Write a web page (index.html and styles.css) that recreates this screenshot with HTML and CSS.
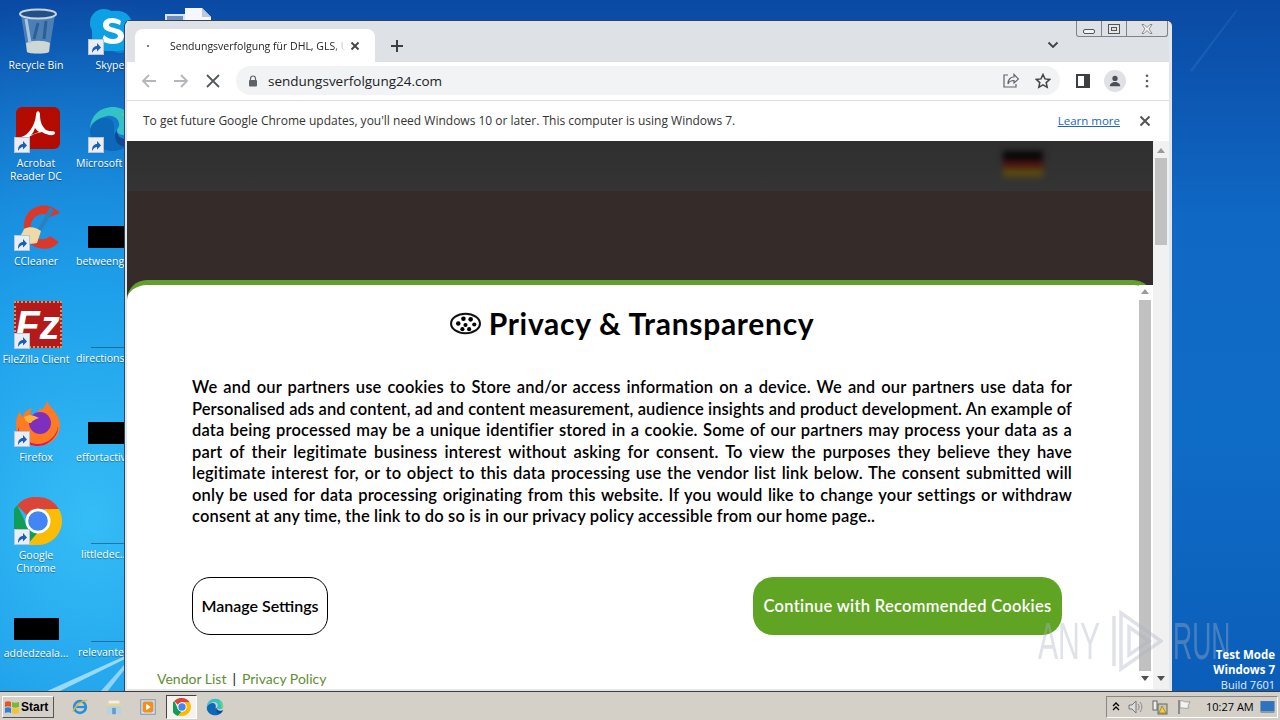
FILE: index.html
```html
<!DOCTYPE html>
<html lang="en">
<head>
<meta charset="utf-8">
<title>Privacy &amp; Transparency</title>
<link rel="stylesheet" href="styles.css">
</head>
<body>
<svg class="defs" width="0" height="0" aria-hidden="true">
  <defs>
    <symbol id="chrome" viewBox="2 2 44 44">
      <path d="M24 2a22 22 0 0 1 19.05 11H24a11 11 0 0 0-9.9 6.2L5 9.5A22 22 0 0 1 24 2z" fill="#db4437"/>
      <path d="M5 9.5l9.5 20a11 11 0 0 0 9 5.5L14 46A22 22 0 0 1 5 9.5z" fill="#0f9d58"/>
      <path d="M43.05 13A22 22 0 0 1 24 46h-10l9.5-11a11 11 0 0 0 9.5-16.5L30 13z" fill="#fbbc05"/>
      <circle cx="24" cy="24" r="11.5" fill="#fff"/>
      <circle cx="24" cy="24" r="9" fill="#4285f4"/>
    </symbol>
    <symbol id="edge" viewBox="0 0 48 48">
      <path d="M2 25C2 11 12 2 25 2c12 0 21 9 21 20 0 5-4 8-10 8-4 0-7-2-7-4 0-3 3-4 2-8-1-5-6-8-12-7C10 13 2 18 2 25z" fill="#35c1c8"/>
      <path d="M2 25c2-8 9-12 16-12 6 0 9 5 8 11-1 8 6 15 14 15-4 5-9 7-15 7C12 46 2 37 2 25z" fill="#0c68b8"/>
      <path d="M29 26c0 5 4 8 9 8 4 0 6-1 8-3-2 6-5 9-7 10-7 2-12-4-12-10 0-3 1-5 2-5z" fill="#114a93"/>
      <path d="M33 8c8 3 13 9 13 14 0 4-2 6-5 7 2-8-1-15-8-21z" fill="#7ed957"/>
    </symbol>
    <symbol id="shortcut" viewBox="0 0 16 16">
      <rect x=".5" y=".5" width="15" height="15" fill="#e9eef5" stroke="#b9c3d2"/>
      <path d="M4 14c0-5 2-7 5-7V4l4 4.500-4 4V10c-2 0-3 1-5 4z" fill="#1d5fb3"/>
    </symbol>
  </defs>
</svg>

<main class="desktop">
  <svg class="wall-rays" viewBox="0 0 1280 720" aria-hidden="true">
    <path d="M45 692L125 656v3L58 692z" fill="#bfe9fb" opacity=".75"/>
    <path d="M100 692l25-28v5l-18 23z" fill="#d6f2fc" opacity=".6"/>
    <path d="M1190 70L1236 10h2l-46 62z" fill="#3b83c9" opacity=".25"/>
  </svg>

  <svg class="peek-doc" viewBox="0 0 46 14" aria-hidden="true">
    <rect x="0" y="6" width="20" height="8" fill="#d7e4f2"/>
    <rect x="2" y="8" width="16" height="6" fill="#6d8ec0"/>
    <path d="M20 0h17l9 9v5H20z" fill="#f5f7fa"/>
    <path d="M37 0l9 9h-9z" fill="#b9c9dc"/>
  </svg>

  <div class="icons">
    <div class="dicon">
      <svg class="dicon-art" viewBox="0 0 48 48" aria-hidden="true">
        <path d="M7 8l6 37c3 2 19 2 22 0l6-37z" fill="#4d7fb4"/>
        <path d="M12 36l1 9c3 2 19 2 22 0l1-9c-6-3-18-3-24 0z" fill="#cfd6d6"/>
        <path d="M12 12l4 24" stroke="#a7c6e2" stroke-width="3" fill="none"/>
        <path d="M24 16l-4 16M32 14l-2 18" stroke="#2a5f98" stroke-width="3" fill="none"/>
        <ellipse cx="24" cy="7" rx="18" ry="4.500" fill="#244f85" stroke="#c4d5e6" stroke-width="2"/>
      </svg>
      <span class="dicon-name">Recycle Bin</span>
    </div>
    <div class="dicon">
      <svg class="dicon-art" viewBox="0 0 48 48" aria-hidden="true">
        <circle cx="16" cy="16" r="14" fill="#11a0e0"/><circle cx="32" cy="32" r="14" fill="#0b83cc"/>
        <rect x="4" y="4" width="40" height="40" rx="14" fill="#0ea0e4"/>
        <path d="M33 14c-2-2-6-3-9-3-6 0-9 3-9 7 0 9 15 6 15 11 0 2-2 3-5 3-4 0-7-2-9-4l-2 6c3 2 7 3 11 3 7 0 11-3 11-8 0-9-15-7-15-11 0-2 2-2 4-2 3 0 5 1 7 2z" fill="#fff"/>
      </svg>
      <svg class="dicon-arrow" aria-hidden="true"><use href="#shortcut"/></svg>
      <span class="dicon-name">Skype</span>
    </div>
    <div class="dicon">
      <svg class="dicon-art" viewBox="0 0 48 48" aria-hidden="true">
        <rect x="2" y="2" width="44" height="42" rx="6" fill="#b30b00"/>
        <path d="M7 32c8-2 14-12 15-22 0-5 4-5 4 0 0 8 3 12 6 15 4 2 9 0 9 3s-7 3-13-1c-6 1-11 3-14 6-4 5-9 2-7-1zm14-9c-1 3-2 5-4 7l8-3c-2-1-3-3-4-4z" fill="#fff"/>
      </svg>
      <svg class="dicon-arrow" aria-hidden="true"><use href="#shortcut"/></svg>
      <span class="dicon-name">Acrobat Reader DC</span>
    </div>
    <div class="dicon">
      <svg class="dicon-art" aria-hidden="true"><use href="#edge"/></svg>
      <svg class="dicon-arrow" aria-hidden="true"><use href="#shortcut"/></svg>
      <span class="dicon-name dicon-left-3">Microsoft Edge</span>
    </div>
    <div class="dicon">
      <svg class="dicon-art" viewBox="0 0 48 48" aria-hidden="true">
        <path d="M46 10C38 0 22 0 14 10 7 20 9 34 18 42c9 6 20 5 27-3l-9-6c-5 5-13 4-17-1-4-6-3-13 2-18 5-4 11-4 15 0z" fill="#d8392b"/>
        <path d="M36 4L24 26l3 2L40 7z" fill="#2f7fbe"/>
        <path d="M10 26c5-3 12-2 17 2l-4 12c-7 2-16 0-20-6 3 0 5-3 7-8z" fill="#efd9a6"/>
      </svg>
      <svg class="dicon-arrow" aria-hidden="true"><use href="#shortcut"/></svg>
      <span class="dicon-name">CCleaner</span>
    </div>
    <div class="dicon">
      <div class="censor censor-wide"></div>
      <span class="dicon-name dicon-left-3">betweengroup.rtf</span>
    </div>
    <div class="dicon">
      <div class="fz-logo"><span class="fz-text">Fz</span></div>
      <svg class="dicon-arrow" aria-hidden="true"><use href="#shortcut"/></svg>
      <span class="dicon-name">FileZilla Client</span>
    </div>
    <div class="dicon">
      <div class="doc-line"></div>
      <span class="dicon-name dicon-left-3">directionsfile.rtf</span>
    </div>
    <div class="dicon">
      <svg class="dicon-art" viewBox="0 0 48 48" aria-hidden="true">
        <path d="M33 2c1 5 13 12 13 24 0 12-10 21-22 21C11 47 1 37 2 24c0-4 2-9 4-12 0 3 1 4 3 6 1-5 5-8 9-9-2 3-2 5-1 7 5 0 8-4 9-7 1 3 4 2 7-7z" fill="#ff7a22"/>
        <path d="M4 28c2 10 10 17 20 17 10 0 19-8 20-18 1 9-9 20-20 20C12 47 3 38 4 28z" fill="#e5134f"/>
        <circle cx="26" cy="24" r="11" fill="#7d2fbf"/>
        <path d="M10 18c5-3 10-2 15 1-4 1-7 3-8 5-3 0-6-2-7-6z" fill="#ffb13b"/>
      </svg>
      <svg class="dicon-arrow" aria-hidden="true"><use href="#shortcut"/></svg>
      <span class="dicon-name">Firefox</span>
    </div>
    <div class="dicon">
      <div class="censor censor-wide"></div>
      <span class="dicon-name dicon-left-3">effortactive.rtf</span>
    </div>
    <div class="dicon">
      <svg class="dicon-art" aria-hidden="true"><use href="#chrome"/></svg>
      <svg class="dicon-arrow" aria-hidden="true"><use href="#shortcut"/></svg>
      <span class="dicon-name">Google Chrome</span>
    </div>
    <div class="dicon">
      <div class="doc-line"></div>
      <span class="dicon-name dicon-left-8">littledec...</span>
    </div>
    <div class="dicon">
      <div class="censor censor-low"></div>
      <span class="dicon-name">addedzeala...</span>
    </div>
    <div class="dicon">
      <div class="doc-line"></div>
      <span class="dicon-name dicon-left-5">relevantexe</span>
    </div>
  </div>

  <section class="window">
    <div class="tabstrip">
      <div class="tab">
        <span class="tab-dot"></span>
        <span class="tab-title">Sendungsverfolgung für DHL, GLS, UPS</span>
        <svg class="tab-close" viewBox="0 0 10 10" aria-hidden="true"><path d="M1.500 1.500l7 7m0-7l-7 7"/></svg>
      </div>
      <svg class="new-tab" viewBox="0 0 12 12" aria-hidden="true"><path d="M6 0v12M0 6h12"/></svg>
      <svg class="tab-menu" viewBox="0 0 12 8" aria-hidden="true"><path d="M1.500 1.500L6 6l4.500-4.500"/></svg>
    </div>

    <div class="toolbar">
      <svg class="nav nav-off" viewBox="0 0 16 16" aria-hidden="true"><path d="M15 8H2M8 2L2 8l6 6"/></svg>
      <svg class="nav nav-off" viewBox="0 0 16 16" aria-hidden="true"><path d="M1 8h13M8 2l6 6-6 6"/></svg>
      <svg class="nav nav-on" viewBox="0 0 16 16" aria-hidden="true"><path d="M2 2l12 12M14 2L2 14"/></svg>
      <div class="omnibox">
        <svg class="lock" viewBox="0 0 10 12" aria-hidden="true"><path d="M2.500 5V3.500a2.500 2.500 0 0 1 5 0V5" fill="none" stroke="#5f6368" stroke-width="1.200"/><rect x="1" y="5" width="8" height="6.500" rx="1" fill="#5f6368"/></svg>
        <span class="url">sendungsverfolgung24.com</span>
        <svg class="omni-icon" viewBox="0 0 16 16" aria-hidden="true"><path d="M5 2H1v12h12v-3M5 11c0-5 3-7 6-7V1.500L15.500 6 11 10V7.500c-3 0-5 1-6 3.500z"/></svg>
        <svg class="omni-icon omni-star" viewBox="0 0 16 16" aria-hidden="true"><path d="M8 1.500l2 4.400 4.800.5-3.600 3.200 1 4.700L8 11.900l-4.200 2.400 1-4.700L1.200 6.400 6 5.900z"/></svg>
      </div>
      <svg class="panel-icon" viewBox="0 0 14 14" aria-hidden="true"><path d="M0 0h14v14H0z" fill="#3c4043"/><path d="M2 2h6v10H2z" fill="#fff"/></svg>
      <div class="avatar"><svg class="avatar-art" viewBox="0 0 16 16" aria-hidden="true"><circle cx="8" cy="5" r="3"/><path d="M2 14c0-3 3-5 6-5s6 2 6 5z"/></svg></div>
      <svg class="menu-dots" viewBox="0 0 4 16" aria-hidden="true"><circle cx="2" cy="2" r="1.500"/><circle cx="2" cy="8" r="1.500"/><circle cx="2" cy="14" r="1.500"/></svg>
    </div>

    <div class="infobar">
      <span class="info-text">To get future Google Chrome updates, you'll need Windows 10 or later. This computer is using Windows 7.</span>
      <a class="info-link" href="#">Learn more</a>
      <svg class="info-close" viewBox="0 0 12 12" aria-hidden="true"><path d="M1.500 1.500l9 9m0-9l-9 9"/></svg>
    </div>

    <div class="page">
      <div class="page-main">
        <div class="page-band"></div>
        <div class="flag"><span class="flag-b"></span><span class="flag-r"></span><span class="flag-y"></span></div>
        <div class="modal">
          <div class="modal-body">
            <h1 class="modal-title">
              <svg class="cookie" viewBox="0 0 30 22" aria-hidden="true">
                <ellipse cx="15" cy="11" rx="14" ry="9.500" fill="none" stroke="#111" stroke-width="2"/>
                <circle cx="8" cy="11" r="2.200"/><circle cx="13" cy="6.500" r="2.200"/><circle cx="20" cy="7" r="2.200"/>
                <circle cx="23.500" cy="12" r="2"/><circle cx="15" cy="12.500" r="2"/><circle cx="12" cy="16.500" r="2"/><circle cx="18.500" cy="16.500" r="2"/>
              </svg>
              Privacy &amp; Transparency
            </h1>
            <p class="modal-copy">
              <span class="copy-line">We and our partners use cookies to Store and/or access information on a device. We and our partners use data for</span>
              <span class="copy-line copy-tight">Personalised ads and content, ad and content measurement, audience insights and product development. An example of</span>
              <span class="copy-line">data being processed may be a unique identifier stored in a cookie. Some of our partners may process your data as a</span>
              <span class="copy-line">part of their legitimate business interest without asking for consent. To view the purposes they believe they have</span>
              <span class="copy-line">legitimate interest for, or to object to this data processing use the vendor list link below. The consent submitted will</span>
              <span class="copy-line">only be used for data processing originating from this website. If you would like to change your settings or withdraw</span>
              <span class="copy-line copy-last">consent at any time, the link to do so is in our privacy policy accessible from our home page..</span>
            </p>
            <div class="modal-actions">
              <button class="btn btn-manage">Manage Settings</button>
              <button class="btn btn-continue">Continue with Recommended Cookies</button>
            </div>
            <div class="modal-links">
              <a class="modal-link" href="#">Vendor List</a><span class="link-sep">|</span><a class="modal-link" href="#">Privacy Policy</a>
            </div>
          </div>
          <div class="scrollbar scrollbar-inner">
            <span class="arrow-up"></span>
            <span class="thumb"></span>
            <span class="arrow-down"></span>
          </div>
        </div>
      </div>
      <div class="scrollbar scrollbar-outer">
        <span class="arrow-up"></span>
        <span class="thumb"></span>
        <span class="arrow-down"></span>
      </div>
    </div>

    <div class="caption">
      <span class="cap-btn cap-min"><span class="cap-min-glyph"></span></span>
      <span class="cap-btn cap-max"><span class="cap-max-glyph"></span></span>
      <span class="cap-btn cap-close">
        <svg class="cap-x" viewBox="0 0 12 10" aria-hidden="true"><path d="M1 .5h2l3 3 3-3h2L8 5l3 4.500H9L6 6.500 3 9.500H1L4 5z"/></svg>
      </span>
    </div>
  </section>

  <div class="watermark" aria-hidden="true">
    <span class="wm-text wm-any">ANY</span>
    <svg class="wm-logo" viewBox="0 0 51 62"><path d="M2 6v50M9 3l40 28L9 59zM17 17l20 14-20 14z"/></svg>
    <span class="wm-text wm-run">RUN</span>
  </div>

  <div class="testmode">
    <span class="tm-bold">Test Mode</span>
    <span class="tm-bold">Windows 7</span>
    <span class="tm-reg">Build 7601</span>
  </div>

  <footer class="taskbar">
    <button class="start">
      <svg class="start-flag" viewBox="0 0 16 14" aria-hidden="true">
        <path d="M1 2c2-1 4-1 6 0v5c-2-1-4-1-6 0z" fill="#e2552b"/>
        <path d="M8 2c2 1 4 1 7 0v5c-3 1-5 1-7 0z" fill="#7cb82f"/>
        <path d="M1 8c2-1 4-1 6 0v5c-2-1-4-1-6 0z" fill="#2f7fd6"/>
        <path d="M8 8c2 1 4 1 7 0v5c-3 1-5 1-7 0z" fill="#f4c22b"/>
      </svg>
      Start
    </button>
    <div class="quick">
      <span class="quick-item">
        <svg class="task-icon" viewBox="0 0 20 20" aria-hidden="true"><circle cx="10" cy="10" r="6.500" fill="none" stroke="#2b8fd8" stroke-width="3"/><path d="M4 10h12" stroke="#2b8fd8" stroke-width="2.500"/><path d="M2 15C5 8 12 3 18 2" fill="none" stroke="#e0b83a" stroke-width="1.500"/></svg>
      </span>
      <span class="quick-item">
        <svg class="task-icon" viewBox="0 0 20 20" aria-hidden="true"><path d="M2 6h16v12H2z" fill="#e8d48a"/><path d="M2 9h16v9H2z" fill="#b9d2e2"/><path d="M8 11h4v7H8z" fill="#5f9ccc"/><path d="M4 3h12v3H4z" fill="#f3f1e6"/></svg>
      </span>
      <span class="quick-item">
        <svg class="task-icon" viewBox="0 0 20 20" aria-hidden="true"><rect x="2" y="2" width="16" height="16" fill="#dbe4ef" stroke="#6f8db0"/><rect x="4" y="4" width="12" height="12" rx="2" fill="#f0901e"/><path d="M8 6.500l5 3.500-5 3.500z" fill="#fff"/></svg>
      </span>
      <span class="quick-item quick-active">
        <svg class="task-icon" aria-hidden="true"><use href="#chrome"/></svg>
      </span>
      <span class="quick-item">
        <svg class="task-icon" aria-hidden="true"><use href="#edge"/></svg>
      </span>
    </div>
    <div class="tray">
      <span class="tray-up">
        <svg class="tray-chevron" viewBox="0 0 8 9" aria-hidden="true"><path d="M1 4l3-3 3 3M1 8l3-3 3 3"/></svg>
      </span>
      <svg class="tray-icon tray-speaker" viewBox="0 0 16 16" aria-hidden="true"><path d="M1 6h3l4-4v12l-4-4H1z" fill="#ddd" stroke="#777"/><path d="M10 5c1.500 2 1.500 4 0 6M12 3c2.500 3 2.500 7 0 10" fill="none" stroke="#8a8a8a"/></svg>
      <svg class="tray-icon" viewBox="0 0 16 16" aria-hidden="true"><rect x="1" y="2" width="4" height="9" fill="#eee" stroke="#666"/><rect x="6" y="5" width="9" height="10" fill="#c9c4b4" stroke="#666"/><path d="M10 7l4 7H7z" fill="#f4cf2f" stroke="#8a6d00" stroke-width=".6"/></svg>
      <svg class="tray-icon" viewBox="0 0 16 16" aria-hidden="true"><path d="M3 1v14" stroke="#777" stroke-width="1.500"/><path d="M4 2c3-1 4 1 6 1 2 0 3 0 4-.5L12 7l1 2c-3 1-5-.5-9 0z" fill="#f2f2f2" stroke="#888" stroke-width=".7"/></svg>
      <span class="clock">10:27 AM</span>
      <svg class="tray-desktop" viewBox="0 0 16 14" aria-hidden="true"><rect x="0" y="0" width="16" height="12" fill="#2f72c0" stroke="#6a8ab0" stroke-width=".6"/><rect x="0" y="12" width="16" height="2" fill="#8a9aa8"/></svg>
    </div>
  </footer>
</main>
</body>
</html>
```
FILE: styles.css
```css
* { box-sizing: border-box; }
html, body { margin: 0; padding: 0; width: 1280px; height: 720px; overflow: hidden; }
body { font-family: "Open Sans", "DejaVu Sans", sans-serif; }
.defs { position: absolute; }

.desktop {
  position: relative;
  width: 1280px;
  height: 720px;
  overflow: hidden;
  background:
    radial-gradient(ellipse 420px 520px at 90px 520px, #35bdf6 0%, #1e9fea 45%, rgba(20,120,215,0) 100%),
    linear-gradient(180deg, #0a4aa4 0%, #0f68c4 30%, #0f6cc6 60%, #0a5cb8 100%);
}
.wall-rays { position: absolute; inset: 0; width: 1280px; height: 720px; }
.peek-doc { position: absolute; left: 165px; top: 8px; width: 46px; height: 14px; }

/* desktop icons */
.icons {
  position: absolute;
  left: -1px;
  top: 6px;
  display: grid;
  grid-template-columns: 74px 74px;
  grid-auto-rows: 98px;
}
.dicon {
  position: relative;
  display: flex;
  flex-direction: column;
  align-items: center;
  color: #fff;
}
.dicon-art { width: 48px; height: 48px; margin: 1px 0 0 3px; }
.dicon-arrow { position: absolute; left: 15px; top: 33px; width: 16px; height: 16px; }
.dicon-name {
  width: 74px;
  margin-top: 4px;
  font: 10.5px/13px "Open Sans", sans-serif;
  text-align: center;
  overflow: hidden;
  text-shadow: 0 1px 1px rgba(0,0,0,.4);
}
.dicon-left-3, .dicon-left-5, .dicon-left-8 { text-align: left; white-space: nowrap; }
.dicon-left-3 { padding-left: 3px; }
.dicon-left-5 { padding-left: 5px; }
.dicon-left-8 { padding-left: 8px; }
.censor { background: #000; height: 22px; margin-top: 24px; margin-bottom: 3px; }
.censor-wide { width: 60px; margin-left: 16px; }
.censor-low { width: 45px; }
.fz-logo {
  width: 48px;
  height: 47px;
  margin: 1px 0 1px 3px;
  background: #b51a1a;
  border: 2px dotted #c96;
  display: flex;
  align-items: center;
  justify-content: center;
}
.fz-text { font: italic 700 40px/1 "Liberation Sans", sans-serif; color: #fff; }
.doc-line { width: 52px; height: 1px; margin-top: 47px; margin-left: 14px; background: rgba(20,50,90,.5); }

/* browser window */
.window {
  position: absolute;
  left: 125px;
  top: 21px;
  width: 1047px;
  height: 670px;
  display: flex;
  flex-direction: column;
  padding: 0 3px 2px 2px;
  background: #e3e6ea;
  border-radius: 5px 5px 0 0;
  box-shadow: 0 -1px 0 #345, -1px 0 0 #234a68;
}
.tabstrip {
  height: 41px;
  flex: none;
  display: flex;
  align-items: flex-end;
  padding-left: 8px;
  background: #dee1e6;
}
.tab {
  width: 240px;
  height: 33px;
  display: flex;
  align-items: center;
  background: #fff;
  border-radius: 8px 8px 0 0;
}
.tab-dot { width: 2px; height: 2px; margin-left: 12px; background: #555; border-radius: 50%; }
.tab-title {
  width: 176px;
  margin-left: 21px;
  font: 10.5px/14px "Open Sans", sans-serif;
  color: #222;
  white-space: nowrap;
  overflow: hidden;
  -webkit-mask-image: linear-gradient(90deg, #000 92%, transparent);
  mask-image: linear-gradient(90deg, #000 92%, transparent);
}
.tab-close { width: 10px; height: 10px; margin-left: 4px; fill: none; stroke: #444; stroke-width: 1.800; }
.new-tab { width: 12px; height: 12px; margin: 0 0 10px 16px; fill: none; stroke: #3c4043; stroke-width: 2; }
.tab-menu { width: 12px; height: 8px; margin: 0 110px 13px auto; fill: none; stroke: #3c4043; stroke-width: 1.800; }

.toolbar {
  height: 39px;
  flex: none;
  display: flex;
  align-items: center;
  padding: 0 0 1px 14px;
  background: #fff;
  border-bottom: 1px solid #dadce0;
}
.nav { width: 16px; height: 16px; margin-right: 16px; fill: none; stroke-width: 1.800; }
.nav-off { stroke: #b4b6b9; }
.nav-on { stroke: #55585c; margin-right: 15px; }
.omnibox {
  width: 824px;
  height: 29px;
  flex: none;
  display: flex;
  align-items: center;
  padding-left: 12px;
  background: #f1f3f4;
  border-radius: 15px;
}
.lock { width: 10px; height: 12px; flex: none; }
.url { margin-left: 10px; font: 13.5px/18px "Open Sans", sans-serif; color: #202124; flex: 1; }
.omni-icon { width: 16px; height: 16px; margin-right: 16px; fill: none; stroke: #5f6368; stroke-width: 1.200; flex: none; }
.omni-star { stroke: #444; stroke-width: 1.500; margin-right: 9px; }
.panel-icon { width: 14px; height: 14px; margin-left: 16px; }
.avatar {
  width: 22px;
  height: 22px;
  margin-left: 14px;
  display: flex;
  align-items: center;
  justify-content: center;
  border-radius: 50%;
  background: #dfe1e5;
}
.avatar-art { width: 14px; height: 14px; fill: #4a5058; }
.menu-dots { width: 4px; height: 14px; margin-left: 19px; fill: #5a5e63; }

.infobar {
  height: 40px;
  flex: none;
  display: flex;
  align-items: center;
  padding-left: 16px;
  background: #fff;
}
.info-text { font: 12px/16px "Open Sans", sans-serif; color: #333; flex: 1; white-space: nowrap; }
.info-link { font: 11.500px/16px "Open Sans", sans-serif; color: #1a66c2; text-decoration: underline; }
.info-close { width: 12px; height: 12px; margin: 0 18px 0 19px; fill: none; stroke: #555; stroke-width: 2; }

/* page */
.page { flex: 1; display: flex; min-height: 0; }
.page-main {
  position: relative;
  flex: 1;
  background: #352c2a;
}
.page-band { height: 50px; background: linear-gradient(180deg, #2f2f2f, #343434); }
.flag {
  position: absolute;
  left: 876px;
  top: 10px;
  width: 40px;
  height: 26px;
  display: flex;
  flex-direction: column;
  filter: blur(3px);
}
.flag-b { flex: 1; background: #050505; }
.flag-r { flex: 1; background: #4a1212; }
.flag-y { flex: 1; background: #5a4a10; }

.modal {
  position: absolute;
  left: 0;
  right: 0;
  bottom: 0;
  top: 139px;
  display: flex;
  background: #fff;
  border-top: 5px solid #5fa02e;
  border-radius: 20px 20px 0 0;
}
.modal-body { flex: 1; padding: 18px 67px 0 65px; min-width: 0; color: #000; }
.modal-title {
  margin: 0;
  display: flex;
  align-items: center;
  justify-content: center;
  gap: 8px;
  font: 700 30px/40px Lato, sans-serif;
  letter-spacing: .7px;
}
.cookie { width: 31px; height: 23px; flex: none; }
.modal-copy { margin: 34px 0 0; font: 600 16.500px/21.500px Lato, sans-serif; letter-spacing: .15px; }
.copy-line { display: block; text-align: justify; text-align-last: justify; white-space: nowrap; }
.copy-tight { letter-spacing: .08px; }
.copy-last { text-align-last: left; }
.modal-actions { display: flex; justify-content: space-between; width: 870px; margin-top: 49px; }
.btn { height: 58px; font: 600 16px/20px Lato, sans-serif; cursor: pointer; }
.btn-manage { width: 136px; padding: 0; background: #fff; color: #000; border: 1px solid #000; border-radius: 18px; }
.btn-continue { width: 309px; padding: 0; background: #5fa523; color: #fff; border: 0; border-radius: 20px; font-size: 16.500px; letter-spacing: .3px; }
.modal-links { display: flex; margin: 34px 0 0 -35px; font: 14px/20px Lato, sans-serif; color: #111; }
.link-sep { margin: 0 6px; }
.modal-link { color: #5d8f32; text-decoration: none; }

/* scrollbars */
.scrollbar { display: flex; flex-direction: column; align-items: center; flex: none; background: #f1f1f1; }
.scrollbar-inner { width: 14px; padding: 4px 2px 0 0; background: #fff; }
.scrollbar-outer { width: 16px; padding-top: 7px; }
.thumb { width: 12px; background: #c1c1c1; }
.scrollbar-inner .thumb { flex: 1; margin: 6px 0 5px; }
.scrollbar-outer .thumb { height: 87px; margin: 5px 0 auto; }
.arrow-up { width: 0; height: 0; border: 4px solid transparent; border-top: 0; border-bottom: 5px solid #9a9a9a; }
.arrow-down { width: 0; height: 0; border: 4px solid transparent; border-bottom: 0; border-top: 5px solid #505050; margin-bottom: 8px; }

/* caption buttons */
.caption {
  position: absolute;
  top: 0;
  right: 4px;
  width: 92px;
  height: 16px;
  display: flex;
  border: 1px solid #7d838a;
  border-top: 0;
  border-radius: 0 0 3px 3px;
}
.cap-btn { display: flex; align-items: center; justify-content: center; border-right: 1px solid #7d838a; flex: none; width: 25px; }
.cap-close { border-right: 0; flex: 1; }
.cap-min-glyph { width: 12px; height: 5px; border: 1px solid #555; border-radius: 2px; margin-top: 5px; background: #f4f4f4; }
.cap-max-glyph { width: 12px; height: 10px; border: 1px solid #555; box-shadow: inset 0 0 0 2px #e6e6e6, inset 0 0 0 3px #555; }
.cap-x { width: 12px; height: 10px; fill: #f4f4f4; stroke: #666; stroke-width: .7; }

/* overlay */
.watermark {
  position: absolute;
  left: 1038px;
  top: 610px;
  display: flex;
  align-items: center;
  color: rgba(170,180,195,.38);
  pointer-events: none;
}
.wm-text { font: 400 52px/58px "Liberation Sans", sans-serif; display: inline-block; transform-origin: 0 50%; white-space: nowrap; }
.wm-any { width: 62px; transform: scaleX(.58); }
.wm-run { width: 57px; margin-left: 10px; transform: scaleX(.51); }
.wm-logo { width: 51px; height: 62px; margin-left: 12px; fill: none; stroke: rgba(170,180,195,.38); stroke-width: 3.500; }
.testmode {
  position: absolute;
  right: 5px;
  top: 648px;
  display: flex;
  flex-direction: column;
  align-items: flex-end;
  color: #fff;
  font: 11.500px/14.500px "Open Sans", sans-serif;
}
.tm-bold { font-weight: 700; }
.tm-reg { margin-top: 1px; color: #e4eefb; font-size: 11px; }

/* taskbar */
.taskbar {
  position: absolute;
  left: 0;
  right: 0;
  bottom: 0;
  height: 29px;
  display: flex;
  align-items: center;
  padding: 1px 2px 0;
  background: #d4d0c8;
  border-top: 1px solid #3b3b3b;
}
.start {
  width: 52px;
  height: 22px;
  flex: none;
  display: flex;
  align-items: center;
  gap: 1px;
  padding: 0 0 0 1px;
  background: #d4d0c8;
  color: #000;
  border: 1px solid;
  border-color: #fff #555 #555 #fff;
  font: 700 12px/16px "Liberation Sans", sans-serif;
}
.start-flag { width: 16px; height: 14px; }
.quick { display: flex; align-items: center; margin-left: 9px; }
.quick-item { width: 34px; height: 24px; display: flex; align-items: center; justify-content: center; }
.quick-active { background: #f4f3ef; border: 1px solid; border-color: #444 #fff #fff #444; width: 31px; margin: 0 1px; }
.task-icon { width: 18px; height: 18px; }
.tray {
  margin-left: auto;
  width: 172px;
  height: 22px;
  display: flex;
  align-items: center;
  padding-left: 1px;
  border: 1px solid;
  border-color: #8a8780 #fff #fff #8a8780;
  font: 11px/14px "Open Sans", sans-serif;
  color: #000;
}
.tray-up { width: 16px; flex: none; display: flex; justify-content: center; }
.tray-chevron { width: 8px; height: 9px; fill: none; stroke: #000; stroke-width: 1.300; }
.tray-icon { width: 16px; height: 16px; margin-left: 8px; flex: none; }
.tray-speaker { margin-left: 4px; }
.clock { margin-left: 14px; white-space: nowrap; }
.tray-desktop { width: 15px; height: 12px; margin-left: auto; margin-right: 2px; flex: none; }
```
